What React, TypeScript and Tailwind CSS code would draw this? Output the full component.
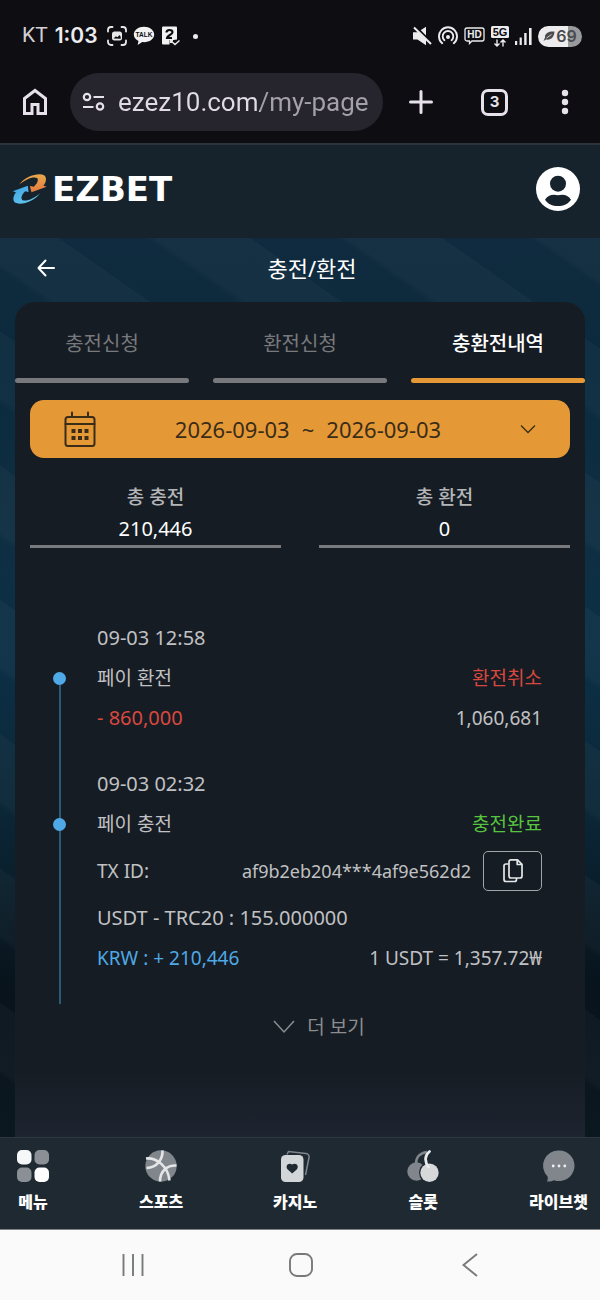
import { useState } from 'react'
import type { ReactNode } from 'react'

type Tone = 'red' | 'green'

const toneClass: Record<Tone, string> = {
  red: 'text-[#d9483f]',
  green: 'text-[#58c43f]',
}

/* ── Status bar icons ── */

function CaptureIcon() {
  return (
    <svg viewBox="0 0 20 20" className="size-5" fill="none" stroke="#e8e8ea" strokeWidth="1.8" strokeLinecap="round" aria-hidden>
      <path d="M1 5.5V4a3 3 0 0 1 3-3h1.5M14.5 1H16a3 3 0 0 1 3 3v1.5M19 14.5V16a3 3 0 0 1-3 3h-1.5M5.5 19H4a3 3 0 0 1-3-3v-1.5" />
      <rect x="5" y="5.5" width="10" height="9" rx="2.5" fill="#e8e8ea" stroke="none" />
      <path d="M6.5 12.5l2.4-2.2 1.6 1 2-2.2 1.2 1.6v2z" fill="#0e0d12" stroke="none" />
    </svg>
  )
}

function TalkIcon() {
  return (
    <svg viewBox="0 0 22 20" className="h-5 w-[22px]" aria-hidden>
      <path d="M11 .8C5.3.8.8 4.2.8 8.5c0 2.8 1.9 5.2 4.7 6.5L4.6 19l4.6-2.9c.6.1 1.2.1 1.8.1 5.7 0 10.200-3.400 10.200-7.700S16.700.8 11 .8z" fill="#f2f2f3" />
      <text x="11" y="11" textAnchor="middle" fontSize="6.5" fontWeight="800" fontFamily="Liberation Sans, sans-serif" fill="#0e0d12">TALK</text>
    </svg>
  )
}

function CallNoteIcon() {
  return (
    <svg viewBox="0 0 19 20" className="h-5 w-[19px]" fill="none" aria-hidden>
      <rect x="1" y="0.5" width="15" height="18" rx="1" fill="#f2f2f3" />
      <path d="M5.5 6.5c0-3 6-3.500 6-.3 0 2.500-5.500 3-5.500 5.800h5" stroke="#0e0d12" strokeWidth="2.2" />
      <path d="M8.5 19v-5h4l6.500-1v6z" fill="#0e0d12" />
      <path d="M9.5 17v-2.500H12M10 15l4 3.500 4.500-4" stroke="#e8e8ea" strokeWidth="1.5" />
    </svg>
  )
}

function MutedIcon() {
  return (
    <svg viewBox="0 0 20 20" className="size-5" aria-hidden>
      <path d="M1 6.2h4.500L14 .8v18.400l-8.500-5.700H1z" fill="#ececee" />
      <path d="M3.500 .5l16 16" stroke="#0e0d12" strokeWidth="2.2" />
      <path d="M2 1.500l17 16.500" stroke="#ececee" strokeWidth="2" />
    </svg>
  )
}

function HotspotIcon() {
  return (
    <svg viewBox="0 0 20 20" className="size-5" fill="none" stroke="#ececee" strokeWidth="1.9" strokeLinecap="round" aria-hidden>
      <path d="M4.2 17.200a9 9 0 1 1 11.600 0" />
      <path d="M6.400 14.200a5.300 5.300 0 1 1 7.200 0" />
      <circle cx="10" cy="11" r="2" fill="#ececee" stroke="none" />
    </svg>
  )
}

function HdIcon() {
  return (
    <svg viewBox="0 0 21 18" className="h-[18px] w-[21px]" aria-hidden>
      <path d="M3 1h15a2 2 0 0 1 2 2v9a2 2 0 0 1-2 2H8l-2.500 2.500V14H3a2 2 0 0 1-2-2V3a2 2 0 0 1 2-2z" fill="none" stroke="#ececee" strokeWidth="1.3" />
      <text x="10.5" y="11.3" textAnchor="middle" fontSize="10" fontWeight="700" fontFamily="Liberation Sans, sans-serif" fill="#ececee">HD</text>
    </svg>
  )
}

function FiveGIcon() {
  return (
    <svg viewBox="0 0 18 21" className="h-[21px] w-[18px]" aria-hidden>
      <rect width="18" height="12" rx="1.5" fill="#ececee" />
      <text x="9" y="10" textAnchor="middle" fontSize="11" fontWeight="700" fontFamily="Liberation Sans, sans-serif" fill="#0e0d12">5G</text>
      <path d="M6 13.500V20M3.500 17.500L6 20l2.500-2.500M12 20.500V14M9.500 16.500L12 14l2.500 2.500" fill="none" stroke="#ececee" strokeWidth="1.4" />
    </svg>
  )
}

function SignalIcon() {
  return (
    <svg viewBox="0 0 17 19" className="h-[19px] w-[17px]" fill="#ececee" aria-hidden>
      <rect x="0" y="14" width="2.2" height="4" />
      <rect x="4.6" y="10.5" width="2.2" height="7.5" />
      <rect x="9.2" y="6" width="2.4" height="12" />
      <rect x="14" y="1" width="2.6" height="17" />
    </svg>
  )
}

function StatusBar() {
  return (
    <div className="flex h-[72px] items-center justify-between pr-[18px] pl-[22px] font-['Inter','Noto_Sans_CJK_KR',sans-serif] text-[#ececee]">
      <div className="flex items-center gap-[7px]">
        <span className="font-['Roboto',sans-serif] text-[21px] text-[#d0d0d4]">KT</span>
        <span className="text-[21px] font-semibold">1:03</span>
        <span className="ml-0.5 flex items-center gap-[6px]">
          <CaptureIcon />
          <TalkIcon />
          <CallNoteIcon />
        </span>
        <span className="ml-1.5 size-[5px] rounded-full bg-[#ececee]" />
      </div>
      <div className="flex items-center gap-[6px]">
        <MutedIcon />
        <HotspotIcon />
        <HdIcon />
        <FiveGIcon />
        <SignalIcon />
        <span className="flex h-[21px] w-11 items-center justify-center gap-px rounded-full bg-[linear-gradient(90deg,#ececee_69%,#9a9a9d_69%)] text-base font-semibold text-[#4b4b4e]">
          <svg viewBox="0 0 12 12" className="size-3" fill="#4b4b4e" aria-hidden>
            <path d="M11.500 1.500C7 1 1.500 2.500 2 7.500L.5 11l2.500-1.500c5 .8 8-2 8.500-8z" />
            <path d="M3.500 8l5-3.500" stroke="#ececee" strokeWidth=".8" />
          </svg>
          69
        </span>
      </div>
    </div>
  )
}

/* ── Browser toolbar ── */

function BrowserBar() {
  const [url, setUrl] = useState('ezez10.com/my-page')
  return (
    <div className="flex h-[73px] items-start border-b-2 border-[#2c333b] pt-px pr-[27px] pl-[18px] text-[#e6e1ea]">
      <button type="button" aria-label="Home" className="flex h-[58px] w-[34px] items-center justify-center">
        <svg viewBox="0 0 26 28" className="h-7 w-[26px]" fill="none" stroke="currentColor" strokeWidth="3" aria-hidden>
          <path d="M2.500 10.500L13 2.500l10.500 8v15H16v-9h-6v9H2.500z" />
        </svg>
      </button>
      <label className="ml-[18px] flex h-[58px] min-w-0 flex-1 items-center gap-3 rounded-full bg-[#26252d] pr-2 pl-3">
        <svg viewBox="0 0 24 20" className="h-5 w-6 shrink-0" fill="none" stroke="currentColor" strokeWidth="2.2" aria-hidden>
          <circle cx="5" cy="5" r="3.2" />
          <path d="M11.500 5H22M1 15h10.500" />
          <circle cx="18" cy="14.5" r="3.2" />
        </svg>
        <input
          aria-label="Address"
          value={url}
          onChange={(e) => setUrl(e.target.value)}
          className="w-full min-w-0 bg-[linear-gradient(90deg,#e0dbe4_142px,#a5a1ab_142px)] bg-clip-text font-['Roboto',sans-serif] text-[26px] text-transparent outline-none"
        />
      </label>
      <div className="ml-6 flex h-[58px] items-center">
        <button type="button" aria-label="New tab" className="flex w-7 justify-center">
          <svg viewBox="0 0 24 24" className="size-6" stroke="currentColor" strokeWidth="3" strokeLinecap="round" aria-hidden>
            <path d="M12 1.500v21M1.500 12h21" />
          </svg>
        </button>
        <button type="button" aria-label="Tabs" className="ml-[46px] flex size-[27px] items-center justify-center rounded-[7px] border-[3px] border-current font-['Inter',sans-serif] text-[15px] font-bold">
          3
        </button>
        <button type="button" aria-label="More" className="ml-[49px] flex w-4 justify-center">
          <svg viewBox="0 0 8 26" className="h-[26px] w-2" fill="currentColor" aria-hidden>
            <circle cx="4" cy="4" r="3.2" />
            <circle cx="4" cy="13" r="3.2" />
            <circle cx="4" cy="22" r="3.2" />
          </svg>
        </button>
      </div>
    </div>
  )
}

/* ── Site header ── */

function LogoMark() {
  return (
    <svg viewBox="0 0 106 90" className="h-[30px] w-[35px]" aria-hidden>
      <defs>
        <linearGradient id="logoOrange" x1="0" y1="0" x2="0" y2="1">
          <stop offset="0" stopColor="#e9a94b" />
          <stop offset="1" stopColor="#e5793f" />
        </linearGradient>
        <linearGradient id="logoBlue" x1="0" y1="0" x2="1" y2="1">
          <stop offset="0" stopColor="#3f9fe0" />
          <stop offset="1" stopColor="#6cd3f7" />
        </linearGradient>
      </defs>
      <path d="M22 32C38 8 78-5 97 3c10 7 6 22-2 32l10 3-46 17-5-19 12 2c9-8 16-20 10-26C66 6 42 14 22 32z" fill="url(#logoOrange)" />
      <path d="M85 58C69 82 29 95 10 87 0 80 4 65 12 55L2 52l46-17 2 19-10-2c-9 8-15 20-9 26 11 6 34-2 54-20z" fill="url(#logoBlue)" />
    </svg>
  )
}

function SiteHeader() {
  return (
    <header className="flex h-[93px] items-center justify-between bg-[#17232c] pr-5 pb-1.5 pl-3">
      <a href="#home" className="flex items-center gap-[5px]">
        <LogoMark />
        <span className="font-['DejaVu_Sans',sans-serif] text-[34px] leading-9 font-bold text-white">EZBET</span>
      </a>
      <button type="button" aria-label="Account">
        <svg viewBox="0 0 132 132" className="size-11" aria-hidden>
          <circle cx="66" cy="66" r="66" fill="#fff" />
          <circle cx="66" cy="50" r="24" fill="#17232c" />
          <path d="M27 98c8-13 22-17 39-13 17-4 31 0 39 13-9 13-22 19-39 19s-30-6-39-19z" fill="#17232c" />
        </svg>
      </button>
    </header>
  )
}

/* ── History card ── */

const tabs = ['충전신청', '환전신청', '충환전내역']

function Tabs() {
  const [active, setActive] = useState(2)
  return (
    <div role="tablist" className="grid grid-cols-3 gap-6">
      {tabs.map((name, i) => (
        <button
          key={name}
          type="button"
          role="tab"
          aria-selected={active === i}
          onClick={() => setActive(i)}
          className={`flex flex-col items-center text-xl ${active === i ? 'font-medium text-white' : 'text-[#77797c]'}`}
        >
          <span className="pt-7 pb-5 leading-7">{name}</span>
          <span className={`h-[5px] w-full rounded-sm ${active === i ? 'bg-[#e59936]' : 'bg-[#77797c]'}`} />
        </button>
      ))}
    </div>
  )
}

function DateRange() {
  return (
    <button
      type="button"
      aria-haspopup="dialog"
      className="flex h-[58px] w-full items-center justify-between rounded-[14px] bg-[#e59936] px-[34px] text-[22px] text-[#3b2c18]"
    >
      <svg viewBox="0 0 32 36" className="h-9 w-8" fill="none" stroke="currentColor" strokeWidth="2" strokeLinecap="round" aria-hidden>
        <rect x="1.5" y="6" width="29" height="29" rx="2.5" />
        <path d="M1.500 13h29M8 1.500V6M24 1.500V6" />
        <path d="M7.500 18h4v4h-4zM14 18h4v4h-4zM20.500 18h4v4h-4zM7.500 25h4v4h-4zM14 25h4v4h-4zM20.500 25h4v4h-4z" fill="currentColor" stroke="none" />
      </svg>
      <span className="flex gap-3">
        <span>2026-09-03</span>
        <span>~</span>
        <span>2026-09-03</span>
      </span>
      <svg viewBox="0 0 16 10" className="h-[10px] w-4" fill="none" stroke="currentColor" strokeWidth="1.3" aria-hidden>
        <path d="M1 1.500l7 7 7-7" />
      </svg>
    </button>
  )
}

function Total({ label, value }: { label: string; value: string }) {
  return (
    <div className="flex flex-col items-center border-b-[3px] border-[#77797c] text-center">
      <dt className="text-[19px] leading-8 font-medium text-[#b4b5b7]">{label}</dt>
      <dd className="text-xl leading-8 text-white">{value}</dd>
    </div>
  )
}

function Row({ children }: { children: ReactNode }) {
  return <div className="flex h-10 items-center justify-between">{children}</div>
}

type EntryProps = {
  date: string
  title: string
  status: string
  tone: Tone
  first?: boolean
  children: ReactNode
}

function Entry({ date, title, status, tone, first, children }: EntryProps) {
  return (
    <li className="flex gap-[31px]">
      <div className="flex w-[13px] flex-col items-center">
        <span className={`h-[54px] w-0.5 ${first ? '' : 'bg-[#2a5a75]'}`} />
        <span className="size-[13px] rounded-full bg-[#4fa9e6]" />
        <span className="w-0.5 flex-1 bg-[#2a5a75]" />
      </div>
      <div className="min-w-0 flex-1 pb-[26px]">
        <Row>
          <time className="text-xl">{date}</time>
        </Row>
        <Row>
          <span>{title}</span>
          <span className={toneClass[tone]}>{status}</span>
        </Row>
        {children}
      </div>
    </li>
  )
}

function CopyIcon() {
  return (
    <svg viewBox="0 0 22 26" className="h-[26px] w-[22px]" fill="none" stroke="#e4e5e6" strokeWidth="1.7" strokeLinejoin="round" aria-hidden>
      <path d="M6.500 6H4a2 2 0 0 0-2 2v13.500a2 2 0 0 0 2 2h8.500a2 2 0 0 0 2-2V20" />
      <path d="M9 1.800h6.500L20 6.300V18a2 2 0 0 1-2 2H9a2 2 0 0 1-2-2V3.800a2 2 0 0 1 2-2z" />
      <path d="M15.200 2v4.500H20" />
    </svg>
  )
}

function HistoryCard() {
  return (
    <section className="mx-[15px] flex-1 rounded-t-[20px] bg-[linear-gradient(0deg,#1e2430_0px,#161c23_70px)]">
      <Tabs />
      <div className="px-[15px] pt-[17px]">
        <DateRange />
        <dl className="mt-[23px] grid grid-cols-2 gap-[38px]">
          <Total label="총 충전" value="210,446" />
          <Total label="총 환전" value="0" />
        </dl>
      </div>
      <ol className="mt-[70px] pr-[43px] pl-[38px] text-[19px] text-[#c0c1c3]">
        <Entry date="09-03 12:58" title="페이 환전" status="환전취소" tone="red" first>
          <Row>
            <span className="text-xl text-[#d9483f]">- 860,000</span>
            <span>1,060,681</span>
          </Row>
        </Entry>
        <Entry date="09-03 02:32" title="페이 충전" status="충전완료" tone="green">
          <div className="flex h-[54px] items-center justify-between">
            <span>TX ID:</span>
            <span className="flex items-center gap-3">
              <span className="text-lg">af9b2eb204***4af9e562d2</span>
              <button type="button" aria-label="Copy TX ID" className="flex h-10 w-[59px] items-center justify-center rounded-[5px] border border-[#a3a5a8]">
                <CopyIcon />
              </button>
            </span>
          </div>
          <Row>
            <span className="text-xl">USDT - TRC20 : 155.000000</span>
          </Row>
          <Row>
            <span className="text-[#4fa9e6]">KRW : + 210,446</span>
            <span>1 USDT = 1,357.72₩</span>
          </Row>
        </Entry>
      </ol>
      <button type="button" className="mx-auto flex h-[46px] items-center gap-3 pl-[38px] text-[19px] text-[#8b8d90]">
        <svg viewBox="0 0 22 14" className="h-[14px] w-[22px]" fill="none" stroke="currentColor" strokeWidth="1.5" aria-hidden>
          <path d="M1 1l10 11L21 1" />
        </svg>
        더 보기
      </button>
    </section>
  )
}

/* ── Bottom navigation ── */

const navItems: { label: string; icon: ReactNode }[] = [
  {
    label: '메뉴',
    icon: (
      <>
        <rect x="0" y="0" width="14.5" height="14.5" rx="5" fill="#f6f7f8" />
        <rect x="17.5" y="0" width="14.5" height="14.5" rx="5" fill="#8b9096" />
        <rect x="0" y="17.5" width="14.5" height="14.5" rx="5" fill="#8b9096" />
        <rect x="17.5" y="17.5" width="14.5" height="14.5" rx="5" fill="#fff" />
      </>
    ),
  },
  {
    label: '스포츠',
    icon: (
      <>
        <circle cx="16" cy="16" r="15.7" fill="#81868c" />
        <g fill="none" stroke="#e3e5e6" strokeWidth="2.6">
          <path d="M1 8.500c11-1 22 8 23.500 22" />
          <path d="M17.500.5c.5 8-5 17-16 17.500" />
          <path d="M31.500 15.500c-9-.5-16.500 5-16.500 16" />
        </g>
      </>
    ),
  },
  {
    label: '카지노',
    icon: (
      <>
        <path d="M8 4.500L9.500 1.500 27 3.500c2 .3 3.500 2 3 4L26.500 25" fill="none" stroke="#81868c" strokeWidth="1.5" />
        <rect x="2" y="5" width="22.5" height="27" rx="4.5" fill="#d3d6d8" />
        <path d="M13.200 23.500l-4.500-4c-3-4 1-7.500 4.500-5 3.500-2.500 7.500 1 4.500 5z" fill="#1f2931" />
      </>
    ),
  },
  {
    label: '슬롯',
    icon: (
      <>
        <path d="M9 14C9 7 13 3 20 2" fill="none" stroke="#81868c" strokeWidth="2.5" />
        <circle cx="9.500" cy="21.500" r="9.2" fill="#81868c" />
        <circle cx="22.500" cy="22.500" r="10.5" fill="#1f2931" />
        <circle cx="22.500" cy="22.800" r="9.2" fill="#d6d8da" />
        <path d="M21.500 17c-4.500-6-3.500-12 1-15.500" fill="none" stroke="#e8eaeb" strokeWidth="2.8" strokeLinecap="round" />
      </>
    ),
  },
  {
    label: '라이브챗',
    icon: (
      <>
        <path d="M16 .5a15.300 15.300 0 1 1-5 29.700c-1.500 1-4.500 1.500-7 1.300.8-1.500 1-3.500.5-5A15.300 15.300 0 0 1 16 .5z" fill="#81868c" />
        <g fill="#eceeef">
          <circle cx="10.2" cy="16" r="1.4" />
          <circle cx="16" cy="16" r="1.4" />
          <circle cx="21.8" cy="16" r="1.4" />
        </g>
      </>
    ),
  },
]

function BottomNav() {
  return (
    <nav className="flex h-[92px] items-start justify-between border-t border-[#2c383f] bg-[#1f2931] pt-3 pr-3 pl-[17px]">
      {navItems.map((item) => (
        <a key={item.label} href="#" className="flex flex-col items-center gap-2 text-base leading-6 font-black text-white">
          <svg viewBox="0 0 32 32" className="size-8" aria-hidden>
            {item.icon}
          </svg>
          {item.label}
        </a>
      ))}
    </nav>
  )
}

function SystemNav() {
  return (
    <div className="flex h-[71px] items-center justify-around border-t border-[#7e8284] bg-[#fafafa] pr-[46px] pl-[49px] text-[#77797a]">
      <button type="button" aria-label="Recent apps">
        <svg viewBox="0 0 24 24" className="size-6" stroke="currentColor" strokeWidth="1.9" aria-hidden>
          <path d="M2.500 1v22M12 1v22M21.500 1v22" />
        </svg>
      </button>
      <button type="button" aria-label="Home screen">
        <svg viewBox="0 0 24 24" className="size-6" fill="none" stroke="currentColor" strokeWidth="1.9" aria-hidden>
          <rect x="1" y="1" width="22" height="22" rx="7" />
        </svg>
      </button>
      <button type="button" aria-label="Back">
        <svg viewBox="0 0 24 24" className="size-6" fill="none" stroke="currentColor" strokeWidth="1.9" aria-hidden>
          <path d="M19 1L5.500 12 19 23" />
        </svg>
      </button>
    </div>
  )
}

export default function App() {
  return (
    <div className="flex min-h-screen flex-col bg-[#0e0d12] font-['Noto_Sans','Noto_Sans_CJK_KR',sans-serif]">
      <StatusBar />
      <BrowserBar />
      <SiteHeader />
      <main className="flex flex-1 flex-col bg-[repeating-linear-gradient(35deg,transparent_0px,transparent_50px,#ffffff07_56px,#ffffff07_110px),linear-gradient(180deg,#102b3f_0%,#0e2a3d_8%,#0a2a3e_14%,#0f2e41_30%,#0c3047_46%,#0b2636_64%,#08131b_84%,#0c1820_100%)]">
        <div className="flex h-16 items-center pr-8 pb-1 pl-9 text-white">
          <button type="button" aria-label="Back to previous page">
            <svg viewBox="0 0 20 20" className="size-5" fill="none" stroke="currentColor" strokeWidth="2" strokeLinecap="round" strokeLinejoin="round" aria-hidden>
              <path d="M18 10H3M9.500 2.500L2.500 10l7 7.500" />
            </svg>
          </button>
          <h1 className="flex-1 text-center text-[22px]">충전/환전</h1>
        </div>
        <HistoryCard />
      </main>
      <BottomNav />
      <SystemNav />
    </div>
  )
}
